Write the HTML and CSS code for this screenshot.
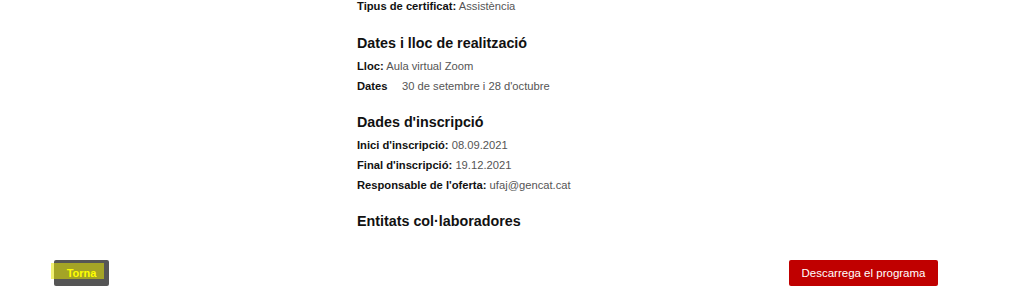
FILE: index.html
```html
<!DOCTYPE html>
<html lang="ca">
<head>
    <meta charset="UTF-8">
    <meta name="viewport" content="width=device-width, initial-scale=1.0">
    <title>Fitxa de l'activitat</title>
    <link rel="stylesheet" href="styles.css">
</head>
<body>

<div class="detail">
    <ul class="fields">
        <li><strong>Tipus de certificat:</strong> Assistència</li>
    </ul>

    <div class="section">
        <h3>Dates i lloc de realització</h3>
        <ul class="fields">
            <li><strong>Lloc:</strong> Aula virtual Zoom</li>
            <li><strong class="dates-label">Dates</strong>30 de setembre i 28 d'octubre</li>
        </ul>
    </div>

    <div class="section">
        <h3>Dades d'inscripció</h3>
        <ul class="fields">
            <li><strong>Inici d'inscripció:</strong> 08.09.2021</li>
            <li><strong>Final d'inscripció:</strong> 19.12.2021</li>
            <li><strong>Responsable de l'oferta:</strong> ufaj@gencat.cat</li>
        </ul>
    </div>

    <div class="section">
        <h3>Entitats col·laboradores</h3>
    </div>
</div>

<div class="actions">
    <a href="#" class="btn btn-back"><span class="focus-mark">Torna</span></a>
    <a href="#" class="btn btn-download">Descarrega el programa</a>
</div>

</body>
</html>
```

FILE: styles.css
```css
body {
    margin: 0;
    font-family: "Liberation Sans", Arial, sans-serif;
    font-size: 11.2px;
    color: #555;
    background-color: #fff;
}
.detail {
    margin: -4px 0 0 357px;
}
.fields {
    list-style-type: none;
    margin: 0;
    padding: 0;
}
.fields li {
    line-height: 20px;
}
.fields strong {
    color: #111;
    font-size: 11.2px;
}
.dates-label {
    display: inline-block;
    width: 45px;
}
.section {
    margin-top: 15px;
}
.section:first-of-type {
    margin-top: 16px;
}
.section h3 {
    margin: 0 0 2px;
    font-size: 14.3px;
    line-height: 22px;
    color: #111;
}
.actions {
    display: flex;
    justify-content: space-between;
    margin: 28px 77px 0 54px;
}
.btn {
    display: inline-block;
    height: 26px;
    line-height: 26px;
    padding: 0 12px;
    border-radius: 2px;
    text-decoration: none;
    color: #fff;
    font-size: 11.5px;
    box-sizing: border-box;
}
.btn-back {
    position: relative;
    width: 55px;
    background-color: #555;
    color: #ff0;
    font-weight: bold;
    font-size: 11px;
    text-align: center;
    padding: 0;
}
.focus-mark {
    position: relative;
    z-index: 1;
}
.btn-back::before {
    content: "";
    position: absolute;
    left: -3px;
    top: 3px;
    width: 53px;
    height: 16px;
    background-color: rgba(230, 230, 0, 0.55);
}
.btn-download {
    width: 149px;
    text-align: center;
    padding: 0;
    background-color: #c00000;
}
```
